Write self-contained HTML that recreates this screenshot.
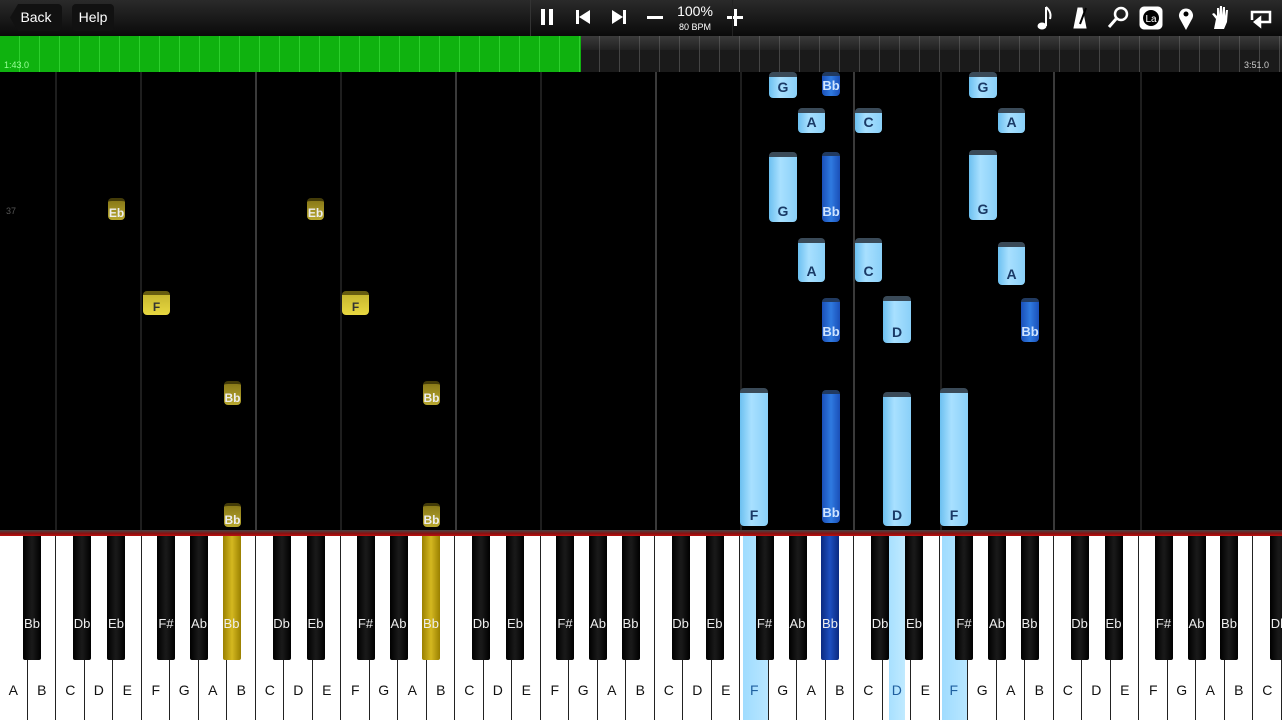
<!DOCTYPE html>
<html><head><meta charset="utf-8"><style>
*{margin:0;padding:0;box-sizing:border-box}
body{width:1282px;height:720px;background:#000;overflow:hidden;position:relative;font-family:"Liberation Sans",sans-serif}
.top{position:absolute;left:0;top:0;width:1282px;height:36px;background:linear-gradient(#2a2a2a,#0a0a0a)}
.btn{position:absolute;top:4px;height:27px;background:#111;border-radius:4px;color:#fff;font-size:14px;line-height:27px;text-align:center}
.ic{position:absolute;color:#fff;font-weight:bold}
.prog{position:absolute;left:0;top:36px;width:1282px;height:36px;background:repeating-linear-gradient(90deg,#1a1a1a 0,#1a1a1a 19px,#444 19px,#444 20px);}
.prog:before{content:"";position:absolute;left:0;top:0;right:0;height:14px;background:linear-gradient(rgba(120,120,120,.35),rgba(60,60,60,.2))}
.green{position:absolute;left:0;top:36px;width:581px;height:36px;background:repeating-linear-gradient(90deg,#0fb20f 0,#0fb20f 19px,#2dd02d 19px,#2dd02d 20px)}
.roll{position:absolute;left:0;top:72px;width:1282px;height:460px;background:#000}
.vl{position:absolute;top:72px;height:460px;width:2px;background:#1e1e1e}
.vl.o{background:#3a3a3a}
.n{position:absolute;border-radius:4px;text-align:center;font-size:14px;display:flex;align-items:flex-end;justify-content:center;padding-bottom:3px;color:#1a3a66;font-weight:bold}
.lb{background:linear-gradient(90deg,#6cc0f0,#a8e0ff 40%,#8ad0f8);border-top:5px solid #3a4a58}
.db{background:linear-gradient(90deg,#1a4fb8,#2f7ae0 50%,#1a4fb8);color:#cfe4ff;font-size:13px;border-top:4px solid #213a60}
.y{background:linear-gradient(#c8b830,#e8d840);color:#333;font-size:12px;border-top:4px solid #665c10;padding-bottom:1px}
.yd{background:linear-gradient(#8a7a18,#b8a830);color:#eee;font-size:12px;border-top:3px solid #443c08;padding-bottom:0}
.kb{position:absolute;left:0;top:530px;width:1282px;height:190px;background:#fff}
.red{position:absolute;left:0;top:530px;width:1282px;height:6px;background:linear-gradient(#444,#8a1010 60%,#c01010)}
.wk{position:absolute;top:536px;height:184px;width:28.5px;border-right:1px solid #222}
.wl{position:absolute;top:682px;width:28.5px;text-align:center;font-size:14px;color:#111}
.bk{position:absolute;top:536px;width:18px;height:124px;background:linear-gradient(90deg,#000,#1a1a1a 50%,#000);color:#eee;font-size:13px;text-align:center;padding-top:80px;border-radius:0 0 2px 2px}
</style></head><body>
<div class="top"></div>
<div class="btn" style="left:10px;width:52px;border-radius:4px 4px 4px 4px;clip-path:polygon(8px 0,100% 0,100% 100%,8px 100%,0 50%)">Back</div>
<div class="btn" style="left:72px;width:42px">Help</div>
<div style="position:absolute;left:530px;top:0;width:1px;height:36px;background:#333"></div>
<div class="ic" style="left:541px;top:9px;width:4px;height:16px;background:#fff"></div>
<div class="ic" style="left:549px;top:9px;width:4px;height:16px;background:#fff"></div>
<svg style="position:absolute;left:576px;top:10px" width="16" height="14"><rect x="0" y="0" width="3" height="14" fill="#fff"/><polygon points="14,0 14,14 3,7" fill="#fff"/></svg>
<svg style="position:absolute;left:611px;top:10px" width="16" height="14"><rect x="12" y="0" width="3" height="14" fill="#fff"/><polygon points="1,0 1,14 12,7" fill="#fff"/></svg>
<div class="ic" style="left:647px;top:16px;width:16px;height:3px;background:#fff"></div>
<div style="position:absolute;left:676px;top:4px;color:#fff;font-size:14px;line-height:14px;width:38px;text-align:center">100%<br><span style="font-size:9px;line-height:9px">80 BPM</span></div>
<div class="ic" style="left:727px;top:16px;width:16px;height:3px;background:#fff"></div>
<div class="ic" style="left:734px;top:9px;width:3px;height:17px;background:#fff"></div>
<div style="position:absolute;left:732px;top:0;width:1px;height:36px;background:#222"></div>
<svg style="position:absolute;left:1030px;top:4px" width="250" height="28" fill="#fff" stroke="#fff">
<g><ellipse cx="12" cy="22" rx="4" ry="3"/><line x1="16" y1="22" x2="16" y2="3" stroke-width="2"/><path d="M16 3 Q22 8 20 15" fill="none" stroke-width="2"/></g>
<g><polygon points="44,24 48,4 52,4 56,24" fill="#fff"/><line x1="50" y1="20" x2="56" y2="4" stroke="#000" stroke-width="2"/></g>
<g><circle cx="91" cy="10" r="6" fill="none" stroke-width="2.5"/><line x1="86" y1="15" x2="79" y2="23" stroke-width="3"/></g>
<g><rect x="110" y="3" width="22" height="22" rx="4"/><circle cx="121" cy="14" r="8" fill="#000" stroke="none"/><text x="121" y="18" font-size="10" fill="#fff" stroke="none" text-anchor="middle" font-family="Liberation Sans">La</text></g>
<g><path d="M156 25 L150 14 A6.5 6.5 0 1 1 162 14 Z"/><circle cx="156" cy="10" r="2.5" fill="#000" stroke="none"/></g>
<g><path d="M184 25 L186 15 L182 10 L184 9 L187 12 L187 4 L189 4 L189 11 L190 2 L192 2 L192 11 L193 3 L195 3 L195 12 L196 6 L198 6 L197 18 L194 25Z" stroke="none"/></g>
<g fill="none" stroke-width="2.5"><path d="M222 16 V8 H240 V18 H230"/><polygon points="230,14 230,22 225,18" fill="#fff"/></g>
</svg>
<div class="prog"></div>
<div class="green"></div>
<div style="position:absolute;left:4px;top:60px;font-size:9px;color:#9f9">1:43.0</div>
<div style="position:absolute;left:1244px;top:60px;font-size:9px;color:#ccc">3:51.0</div>
<div class="roll"></div>
<div class="vl" style="left:55px"></div><div class="vl" style="left:140px"></div><div class="vl o" style="left:255px"></div><div class="vl" style="left:340px"></div><div class="vl o" style="left:455px"></div><div class="vl" style="left:540px"></div><div class="vl o" style="left:655px"></div><div class="vl" style="left:740px"></div><div class="vl o" style="left:853px"></div><div class="vl" style="left:940px"></div><div class="vl o" style="left:1053px"></div><div class="vl" style="left:1140px"></div>
<div style="position:absolute;left:6px;top:206px;font-size:9px;color:#555">37</div>
<div class="n yd" style="left:108px;top:198px;width:17px;height:22px">Eb</div>
<div class="n y" style="left:143px;top:291px;width:27px;height:24px">F</div>
<div class="n yd" style="left:224px;top:381px;width:17px;height:24px">Bb</div>
<div class="n yd" style="left:224px;top:503px;width:17px;height:24px">Bb</div>
<div class="n yd" style="left:307px;top:198px;width:17px;height:22px">Eb</div>
<div class="n y" style="left:342px;top:291px;width:27px;height:24px">F</div>
<div class="n yd" style="left:423px;top:381px;width:17px;height:24px">Bb</div>
<div class="n yd" style="left:423px;top:503px;width:17px;height:24px">Bb</div>
<div class="n lb" style="left:769px;top:72px;width:28px;height:26px">G</div>
<div class="n db" style="left:822px;top:72px;width:18px;height:24px">Bb</div>
<div class="n lb" style="left:798px;top:108px;width:27px;height:25px">A</div>
<div class="n lb" style="left:855px;top:108px;width:27px;height:25px">C</div>
<div class="n lb" style="left:969px;top:72px;width:28px;height:26px">G</div>
<div class="n lb" style="left:998px;top:108px;width:27px;height:25px">A</div>
<div class="n lb" style="left:769px;top:152px;width:28px;height:70px">G</div>
<div class="n db" style="left:822px;top:152px;width:18px;height:70px">Bb</div>
<div class="n lb" style="left:969px;top:150px;width:28px;height:70px">G</div>
<div class="n lb" style="left:798px;top:238px;width:27px;height:44px">A</div>
<div class="n lb" style="left:855px;top:238px;width:27px;height:44px">C</div>
<div class="n lb" style="left:998px;top:242px;width:27px;height:43px">A</div>
<div class="n db" style="left:822px;top:298px;width:18px;height:44px">Bb</div>
<div class="n lb" style="left:883px;top:296px;width:28px;height:47px">D</div>
<div class="n db" style="left:1021px;top:298px;width:18px;height:44px">Bb</div>
<div class="n lb" style="left:740px;top:388px;width:28px;height:138px">F</div>
<div class="n db" style="left:822px;top:390px;width:18px;height:133px">Bb</div>
<div class="n lb" style="left:883px;top:392px;width:28px;height:134px">D</div>
<div class="n lb" style="left:940px;top:388px;width:28px;height:138px">F</div>
<div class="kb"></div>
<div class="wk" style="left:-1px"></div><div class="wk" style="left:27.5px"></div><div class="wk" style="left:56px"></div><div class="wk" style="left:84.5px"></div><div class="wk" style="left:113px"></div><div class="wk" style="left:141.5px"></div><div class="wk" style="left:170px"></div><div class="wk" style="left:198.5px"></div><div class="wk" style="left:227px"></div><div class="wk" style="left:255.5px"></div><div class="wk" style="left:284px"></div><div class="wk" style="left:312.5px"></div><div class="wk" style="left:341px"></div><div class="wk" style="left:369.5px"></div><div class="wk" style="left:398px"></div><div class="wk" style="left:426.5px"></div><div class="wk" style="left:455px"></div><div class="wk" style="left:483.5px"></div><div class="wk" style="left:512px"></div><div class="wk" style="left:540.5px"></div><div class="wk" style="left:569px"></div><div class="wk" style="left:597.5px"></div><div class="wk" style="left:626px"></div><div class="wk" style="left:654.5px"></div><div class="wk" style="left:683px"></div><div class="wk" style="left:711.5px"></div><div class="wk" style="left:740px;background:linear-gradient(90deg,#fff 0,#fff 3px,#9fdcff 3px,#b8e6ff)"></div><div class="wk" style="left:768.5px"></div><div class="wk" style="left:797px"></div><div class="wk" style="left:825.5px"></div><div class="wk" style="left:854px"></div><div class="wk" style="left:882.5px;background:linear-gradient(90deg,#fff 0,#fff 6px,#a8e0ff 6px,#c0eaff 22px,#fff 22px)"></div><div class="wk" style="left:911px"></div><div class="wk" style="left:939.5px;background:linear-gradient(90deg,#fff 0,#fff 2px,#9fdcff 2px,#b8e6ff)"></div><div class="wk" style="left:968px"></div><div class="wk" style="left:996.5px"></div><div class="wk" style="left:1025px"></div><div class="wk" style="left:1053.5px"></div><div class="wk" style="left:1082px"></div><div class="wk" style="left:1110.5px"></div><div class="wk" style="left:1139px"></div><div class="wk" style="left:1167.5px"></div><div class="wk" style="left:1196px"></div><div class="wk" style="left:1224.5px"></div><div class="wk" style="left:1253px"></div>
<div class="wl" style="left:-1px">A</div><div class="wl" style="left:27.5px">B</div><div class="wl" style="left:56px">C</div><div class="wl" style="left:84.5px">D</div><div class="wl" style="left:113px">E</div><div class="wl" style="left:141.5px">F</div><div class="wl" style="left:170px">G</div><div class="wl" style="left:198.5px">A</div><div class="wl" style="left:227px">B</div><div class="wl" style="left:255.5px">C</div><div class="wl" style="left:284px">D</div><div class="wl" style="left:312.5px">E</div><div class="wl" style="left:341px">F</div><div class="wl" style="left:369.5px">G</div><div class="wl" style="left:398px">A</div><div class="wl" style="left:426.5px">B</div><div class="wl" style="left:455px">C</div><div class="wl" style="left:483.5px">D</div><div class="wl" style="left:512px">E</div><div class="wl" style="left:540.5px">F</div><div class="wl" style="left:569px">G</div><div class="wl" style="left:597.5px">A</div><div class="wl" style="left:626px">B</div><div class="wl" style="left:654.5px">C</div><div class="wl" style="left:683px">D</div><div class="wl" style="left:711.5px">E</div><div class="wl" style="left:740px;color:#2060a0">F</div><div class="wl" style="left:768.5px">G</div><div class="wl" style="left:797px">A</div><div class="wl" style="left:825.5px">B</div><div class="wl" style="left:854px">C</div><div class="wl" style="left:882.5px;color:#2060a0">D</div><div class="wl" style="left:911px">E</div><div class="wl" style="left:939.5px;color:#2060a0">F</div><div class="wl" style="left:968px">G</div><div class="wl" style="left:996.5px">A</div><div class="wl" style="left:1025px">B</div><div class="wl" style="left:1053.5px">C</div><div class="wl" style="left:1082px">D</div><div class="wl" style="left:1110.5px">E</div><div class="wl" style="left:1139px">F</div><div class="wl" style="left:1167.5px">G</div><div class="wl" style="left:1196px">A</div><div class="wl" style="left:1224.5px">B</div><div class="wl" style="left:1253px">C</div>
<div class="bk" style="left:23px">Bb</div><div class="bk" style="left:73px">Db</div><div class="bk" style="left:107px">Eb</div><div class="bk" style="left:157px">F#</div><div class="bk" style="left:190px">Ab</div>
<div class="bk" style="left:222.5px;background:linear-gradient(90deg,#9a8000,#d4b820 50%,#9a8000)">Bb</div><div class="bk" style="left:272.5px">Db</div><div class="bk" style="left:306.5px">Eb</div><div class="bk" style="left:356.5px">F#</div><div class="bk" style="left:389.5px">Ab</div>
<div class="bk" style="left:422px;background:linear-gradient(90deg,#9a8000,#d4b820 50%,#9a8000)">Bb</div><div class="bk" style="left:472px">Db</div><div class="bk" style="left:506px">Eb</div><div class="bk" style="left:556px">F#</div><div class="bk" style="left:589px">Ab</div>
<div class="bk" style="left:621.5px">Bb</div><div class="bk" style="left:671.5px">Db</div><div class="bk" style="left:705.5px">Eb</div><div class="bk" style="left:755.5px">F#</div><div class="bk" style="left:788.5px">Ab</div>
<div class="bk" style="left:821px;background:linear-gradient(90deg,#0a2a80,#1e4fc0 50%,#0a2a80)">Bb</div><div class="bk" style="left:871px">Db</div><div class="bk" style="left:905px">Eb</div><div class="bk" style="left:955px">F#</div><div class="bk" style="left:988px">Ab</div>
<div class="bk" style="left:1020.5px">Bb</div><div class="bk" style="left:1070.5px">Db</div><div class="bk" style="left:1104.5px">Eb</div><div class="bk" style="left:1154.5px">F#</div><div class="bk" style="left:1187.5px">Ab</div>
<div class="bk" style="left:1220px">Bb</div><div class="bk" style="left:1270px">Db</div>
<div class="red"></div>
</body></html>
